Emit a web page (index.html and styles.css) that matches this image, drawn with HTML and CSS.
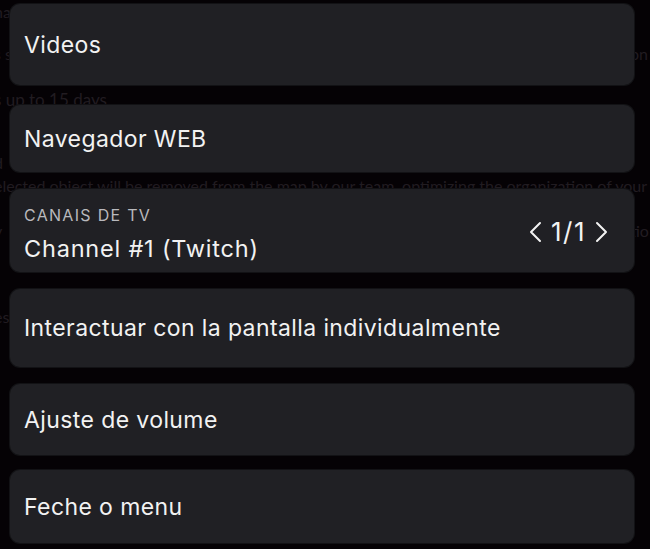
FILE: index.html
```html
<!DOCTYPE html>
<html>
  <head>
    <title>Menu</title>
    <link rel="stylesheet" href="styles.css">
  </head>
  <body>
    <div class="page">
      <p class="l1">na</p>
      <p class="l2">s s<span class="far">on</span></p>
      <p class="l3">s up to 15 days.</p>
      <p class="l4">d</p>
      <p class="l5">elected object will be removed from the map by our team, optimizing the organization of your are</p>
      <p class="l6">y<span class="far">tio</span></p>
      <p class="l7">es</p>
    </div>

    <ul class="menu">
      <li class="item">Videos</li>
      <li class="item">Navegador WEB</li>
      <li class="item channels">
        <div>
          <div class="label">CANAIS DE TV</div>
          <div class="current">Channel #1 (Twitch)</div>
        </div>
        <div class="pager">
          <svg width="13" height="22" viewBox="0 0 13 22"><path d="M11 2 L2 11 L11 20" /></svg>
          <span>1/1</span>
          <svg width="13" height="22" viewBox="0 0 13 22"><path d="M2 2 L11 11 L2 20" /></svg>
        </div>
      </li>
      <li class="item">Interactuar con la pantalla individualmente</li>
      <li class="item">Ajuste de volume</li>
      <li class="item">Feche o menu</li>
    </ul>
  </body>
</html>
```

FILE: styles.css
```css
body {
  margin: 0;
  background: #050205;
  font-family: Inter, "Noto Sans", sans-serif;
  height: 549px;
  overflow: hidden;
}

/* page behind the menu, dimmed */
.page {
  color: #211c21;
  font-family: Lato, sans-serif;
  font-size: 16px;
  position: relative;
}
.page p { margin: 0; position: absolute; left: -6px; white-space: nowrap; }
.page .far { position: absolute; left: 636px; }
.l1 { top: 2px; }
.l2 { top: 44px; }
.l3 { top: 89px; font-size: 17px; }
.l4 { top: 153px; }
.l5 { top: 176px; }
.l6 { top: 221px; }
.l7 { top: 307px; }

.menu {
  list-style: none;
  margin: 0;
  padding: 0;
  position: absolute;
  top: 4px;
  left: 10px;
  width: 624px;
  display: flex;
  flex-direction: column;
  gap: 17px;
}

.item {
  box-sizing: border-box;
  background: #202024;
  border-radius: 10px;
  box-shadow: 0 0 0 1px #121215;
  color: #f2f2f2;
  font-size: 23px;
  letter-spacing: 0.4px;
  padding: 0 14px;
  display: flex;
  align-items: center;
  justify-content: space-between;
}
.item:nth-child(1) { height: 81px; margin-bottom: 3px; }
.item:nth-child(2) { height: 67px; }
.item:nth-child(3) { height: 83px; }
.item:nth-child(4) { height: 78px; }
.item:nth-child(5) { height: 71px; margin-bottom: -2px; }
.item:nth-child(6) { height: 73px; }

.channels { line-height: 33px; padding-top: 2px; }
.channels .current { font-size: 23.5px; letter-spacing: 0.8px; }
.label {
  font-size: 16px;
  color: #b9b9bd;
  letter-spacing: 1.3px;
}

.pager {
  display: flex;
  align-items: center;
  gap: 9px;
  font-size: 26px;
  letter-spacing: 1.5px;
  margin-right: 12px;
}
.pager svg path {
  fill: none;
  stroke: #f2f2f2;
  stroke-width: 2;
  stroke-linecap: round;
  stroke-linejoin: round;
}
```
